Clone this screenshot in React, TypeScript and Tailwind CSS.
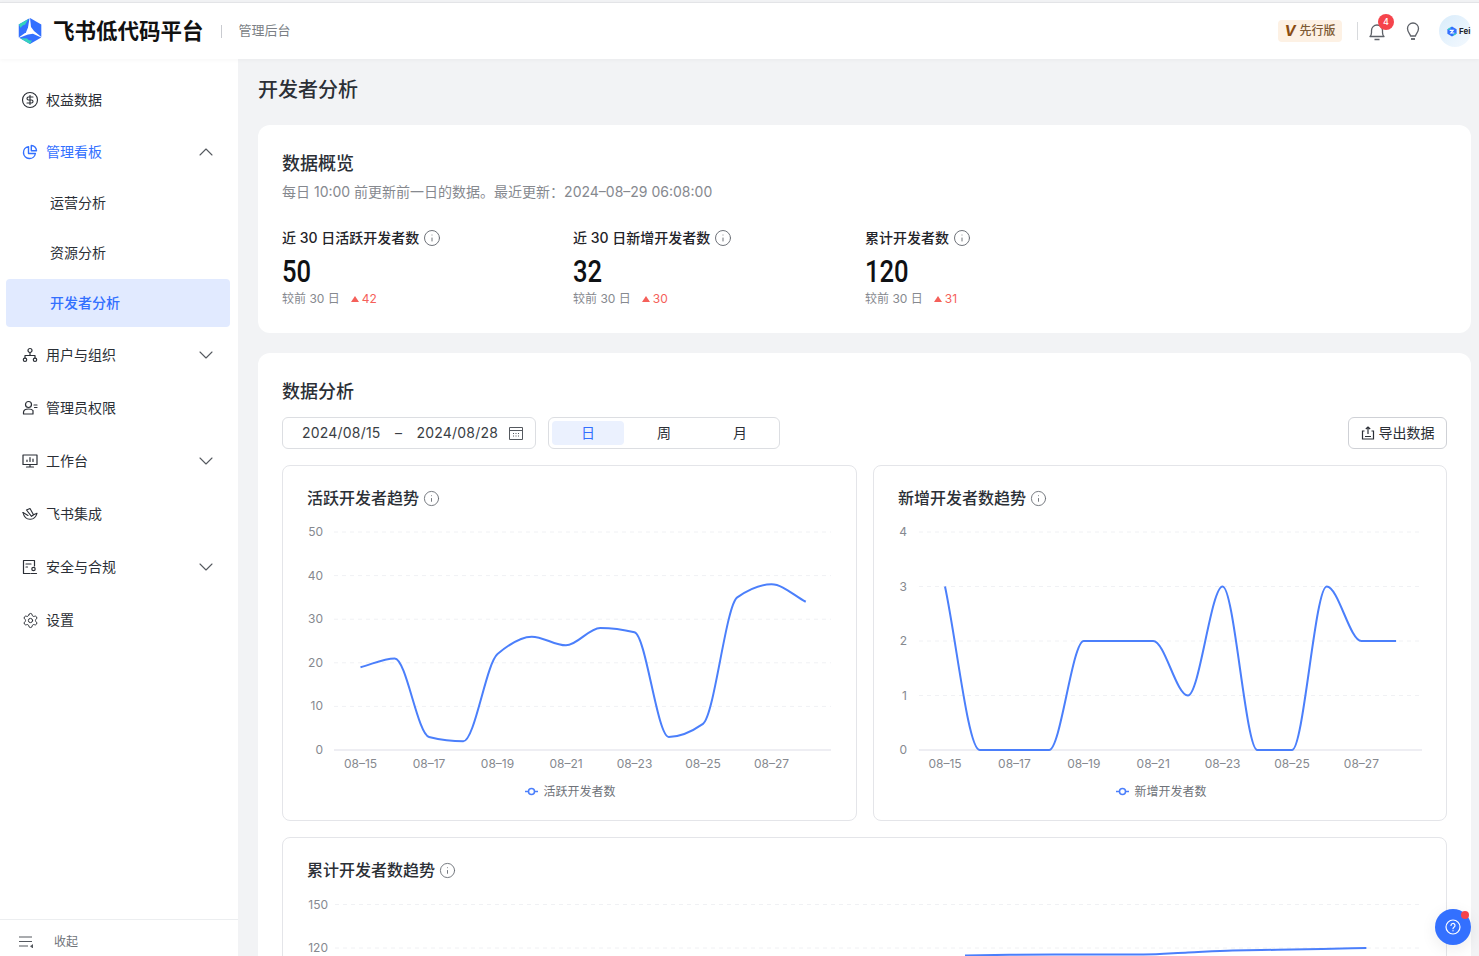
import type { ReactNode } from 'react';
import { ChevronDown, ChevronUp, CircleDollarSign, Info, Settings } from 'lucide-react';

const font = "font-['Inter','Noto_Sans_CJK_SC',sans-serif]";

// monotone cubic path, same shape as the chart lib's smooth line
function monotonePath(pts: [number, number][]): string {
  const n = pts.length;
  const d: number[] = [];
  const t: number[] = [];
  for (let i = 0; i < n - 1; i++) {
    d.push((pts[i + 1][1] - pts[i][1]) / (pts[i + 1][0] - pts[i][0]));
  }
  t.push(d[0]);
  for (let i = 1; i < n - 1; i++) {
    t.push(d[i - 1] * d[i] <= 0 ? 0 : (2 * d[i - 1] * d[i]) / (d[i - 1] + d[i]));
  }
  t.push(d[n - 2]);
  let out = `M${pts[0][0]} ${pts[0][1]}`;
  for (let i = 0; i < n - 1; i++) {
    const h = (pts[i + 1][0] - pts[i][0]) / 3;
    out += `C${pts[i][0] + h} ${pts[i][1] + h * t[i]} ${pts[i + 1][0] - h} ${pts[i + 1][1] - h * t[i + 1]} ${pts[i + 1][0]} ${pts[i + 1][1]}`;
  }
  return out;
}

const LINE = '#4b7ffb';
const dates = ['08-15', '08-17', '08-19', '08-21', '08-23', '08-25', '08-27'];

interface ChartProps {
  box: [number, number, number, number];
  gridLeft: number;
  gridRight: number;
  firstX: number;
  step: number;
  labelEnd: number;
  ticks: { label: string; y: number }[];
  values: number[];
  toY: (v: number) => number;
  legend?: { x: number; text: string };
}

function LineChart({ box, gridLeft, gridRight, firstX, step, labelEnd, ticks, values, toY, legend }: ChartProps) {
  const pts = values.map((v, i) => [firstX + i * step, toY(v)] as [number, number]);
  return (
    <svg
      width={box[2]}
      height={box[3]}
      viewBox={box.join(' ')}
      className="block"
      fontSize="12"
      fontFamily="Inter, 'Noto Sans CJK SC', sans-serif"
    >
      {ticks.map((t, i) => (
        <g key={t.label}>
          {i > 0 || !legend ? (
            <line x1={gridLeft} x2={gridRight} y1={t.y} y2={t.y} stroke="#f0f1f4" strokeDasharray="4 4" />
          ) : null}
          <text x={labelEnd} y={t.y + 4} textAnchor="end" fill="#86898f">
            {t.label}
          </text>
        </g>
      ))}
      {legend && <line x1={gridLeft} x2={gridRight} y1="750" y2="750" stroke="#e8e9ef" strokeWidth="1.5" />}
      {legend &&
        dates.map((d, i) => (
          <text key={d} x={firstX + i * 2 * step} y="768" textAnchor="middle" fill="#86898f">
            {d.replace('-', '–')}
          </text>
        ))}
      <path d={monotonePath(pts)} fill="none" stroke={LINE} strokeWidth="2" />
      {legend && (
        <g>
          <line x1={legend.x} x2={legend.x + 13} y1="791.5" y2="791.5" stroke={LINE} strokeWidth="1.5" />
          <circle cx={legend.x + 6.5} cy="791.5" r="3" fill="#fff" stroke={LINE} strokeWidth="1.5" />
          <text x={legend.x + 18.5} y="796" fill="#6f7379">
            {legend.text}
          </text>
        </g>
      )}
    </svg>
  );
}

function Logo() {
  const wing = 'M13 1 24.300 7.500V20L17 14 14 10Z';
  const sliver = 'M1.700 7.500 11.500 1.900 8 7.800C6 8 4.500 9.200 3.800 11Z';
  return (
    <svg width="26" height="28" viewBox="0 0 26 28">
      {[0, 120, 240].map((r) => (
        <path key={r} d={wing} fill="#3370ff" transform={`rotate(${r} 13 14)`} />
      ))}
      {[0, 240].map((r) => (
        <path key={r} d={sliver} fill="#35d3bd" transform={`rotate(${r} 13 14)`} />
      ))}
    </svg>
  );
}

function InfoIcon({ size = 18 }: { size?: number }) {
  return <Info size={size} strokeWidth={1.3} className="text-[#6b6f76]" />;
}

const stroke = {
  fill: 'none',
  stroke: 'currentColor',
  strokeWidth: 1.2,
  strokeLinecap: 'round' as const,
  strokeLinejoin: 'round' as const,
};

function OrgIcon() {
  return (
    <svg width="16" height="16" viewBox="0 0 16 16" {...stroke}>
      <circle cx="8" cy="3.500" r="2" />
      <circle cx="3" cy="12.800" r="1.700" />
      <circle cx="13" cy="12.800" r="1.700" />
      <path d="M8 5.500v3M3 11V8.500h10V11" />
    </svg>
  );
}

function AdminIcon() {
  return (
    <svg width="16" height="16" viewBox="0 0 16 16" {...stroke}>
      <circle cx="6.500" cy="4.500" r="3" />
      <path d="M1.500 14v-1.500c0-2 2-3.500 5-3.500s4 .8 4.500 1.500V14ZM12 5h3M12.500 7.500H15" />
    </svg>
  );
}

function BoardIcon() {
  return (
    <svg width="16" height="16" viewBox="0 0 16 16" {...stroke}>
      <path d="M1 2h14v9.500H1ZM8 11.500V14M4.500 14h7M5 8.500V7M8 8.500V4.500M11 8.500V6" />
    </svg>
  );
}

function LarkIcon() {
  return (
    <svg width="16" height="16" viewBox="0 0 16 16" {...stroke} strokeWidth="1.100">
      <path d="M1 6.500C2 11 5 13.500 8.500 13.300c3-.2 5.500-2.500 6.500-6l-3.500 1.500" />
      <path d="M1 6.500 6 9.500M4.500 4 8 2.500l3.500 6.300-2 1.500Z" />
    </svg>
  );
}

function ComplianceIcon() {
  return (
    <svg width="16" height="16" viewBox="0 0 16 16" {...stroke}>
      <path d="M8 14.500H1.500v-13h11V7M4 5h5M4 8h1.500" />
      <circle cx="11.500" cy="10" r="1.700" />
      <path d="M9 14.500h5.500" />
    </svg>
  );
}

function PieIcon() {
  return (
    <svg width="16" height="16" viewBox="0 0 16 16" fill="none" stroke="currentColor" strokeWidth="1.400" strokeLinejoin="round">
      <path d="M6.500 2.600A6 6 0 1 0 13.400 9.500H6.500Z" />
      <path d="M9.300 1.500a5.300 5.300 0 0 1 5.200 5.200H9.300Z" />
    </svg>
  );
}

function NavItem({
  icon,
  label,
  caret,
  active,
  className = '',
}: {
  icon: ReactNode;
  label: string;
  caret?: 'up' | 'down';
  active?: boolean;
  className?: string;
}) {
  return (
    <div className={`flex h-12 items-center pl-[22px] pr-[24px] text-sm ${active ? 'text-[#3370ff]' : 'text-[#2b2f36]'} ${className}`}>
      <span className="flex w-4 justify-center">{icon}</span>
      <span className="ml-2 flex-1">{label}</span>
      {caret === 'up' && <ChevronUp size={24} strokeWidth={1.1} className="-mx-1 text-[#55595f]" />}
      {caret === 'down' && <ChevronDown size={24} strokeWidth={1.1} className="-mx-1 text-[#55595f]" />}
    </div>
  );
}

function SubItem({ label, active }: { label: string; active?: boolean }) {
  return (
    <div
      className={`mx-[6px] flex h-12 w-[224px] items-center rounded pl-[44px] text-sm ${
        active ? 'bg-[#e1eaff] font-medium text-[#3370ff]' : 'text-[#2b2f36]'
      }`}
    >
      {label}
    </div>
  );
}

function Sidebar() {
  return (
    <aside className="flex w-[238px] shrink-0 flex-col bg-white">
      <nav className="flex-1 pt-[17px]">
        <NavItem icon={<CircleDollarSign size={18} strokeWidth={1.5} className="-mx-px shrink-0" />} label="权益数据" />
        <NavItem className="mt-1" icon={<PieIcon />} label="管理看板" caret="up" active />
        <div className="mt-[3px] flex flex-col gap-[2px]">
          <SubItem label="运营分析" />
          <SubItem label="资源分析" />
          <SubItem label="开发者分析" active />
        </div>
        <div className="mt-1 flex flex-col gap-[5px]">
          <NavItem icon={<OrgIcon />} label="用户与组织" caret="down" />
          <NavItem icon={<AdminIcon />} label="管理员权限" />
          <NavItem icon={<BoardIcon />} label="工作台" caret="down" />
          <NavItem icon={<LarkIcon />} label="飞书集成" />
          <NavItem icon={<ComplianceIcon />} label="安全与合规" caret="down" />
          <NavItem icon={<Settings size={17} strokeWidth={1.4} className="shrink-0" />} label="设置" />
        </div>
      </nav>
      <div className="flex h-[37px] items-center border-t border-[#eceef0] pl-[19px] pt-[7px] text-xs text-[#6f7379]">
        <svg width="15" height="12" viewBox="0 0 15 12" fill="none" stroke="#55595f" strokeWidth="1.200">
          <path d="M0 1h13M0 5.500h13M0 10h9" />
          <path d="M11 10.300 14 8v4.500Z" fill="#55595f" stroke="none" />
        </svg>
        <span className="ml-[20px]">收起</span>
      </div>
    </aside>
  );
}

function Header() {
  return (
    <header className="relative z-10 flex h-[57px] shrink-0 items-center border-t border-[#e3e4e7] bg-white pl-[17px] pr-2 shadow-[0_1px_4px_rgba(0,0,0,0.04)]">
      <Logo />
      <span className="ml-[10px] text-[21.500px] font-bold text-[#111]">飞书低代码平台</span>
      <span className="ml-[17px] h-[13px] w-px bg-[#c9cbd0]" />
      <span className="ml-[17px] text-[13px] text-[#7b7f85]">管理后台</span>
      <div className="ml-auto mr-[-1px] flex h-[22px] w-[64px] items-center justify-center gap-[4px] rounded bg-[#fdf1e4]">
        <span className="text-[15px] font-bold italic text-[#8a4d12]">V</span>
        <span className="text-xs font-medium text-[#7d5a34]">先行版</span>
      </div>
      <span className="ml-4 h-[18px] w-px bg-[#d8dadd]" />
      <div className="relative ml-[9px] flex w-5 justify-center">
        <svg width="20" height="20" viewBox="0 0 20 20" fill="none" stroke="#5d6168" strokeWidth="1.300" strokeLinejoin="round">
          <path d="M3 15.500c1-1 1.500-2 1.500-4v-2a5.500 5.500 0 0 1 11 0v2c0 2 .5 3 1.500 4ZM7.500 18.500h5" />
        </svg>
        <span className="absolute -right-[7px] -top-[7px] flex h-4 w-4 items-center justify-center rounded-full bg-[#f5444c] text-[9px] font-medium text-white">
          4
        </span>
      </div>
      <svg className="ml-4" width="20" height="20" viewBox="0 0 20 20" fill="none" stroke="#5d6168" strokeWidth="1.300">
        <path d="M7.500 15c0-2-3-3.500-3-7.500a5.500 5.500 0 0 1 11 0c0 4-3 5.500-3 7.500Z" strokeLinejoin="round" />
        <path d="M8 18h4" strokeWidth="1.800" />
      </svg>
      <div className="ml-4 flex h-8 w-8 items-center overflow-hidden rounded-full bg-[linear-gradient(135deg,#d9ecfb,#f4f9fe)] pl-2">
        <svg className="shrink-0" width="10" height="11" viewBox="0 0 26 28">
          <path d="M13 1 25 8v12l-12 7L1 20V8Z" fill="#3370ff" />
          <path d="M7 11h9l-6 7h9" fill="none" stroke="#fff" strokeWidth="3" />
          <path d="M1 8l8-5 2 2-7 5ZM25 20l-8 5-2-2 7-5Z" fill="#33d6c0" />
        </svg>
        <span className="ml-[2px] text-[8px] font-bold text-[#1f2329]">Fei</span>
      </div>
    </header>
  );
}

function Stat({ label, value, delta }: { label: string; value: string; delta: string }) {
  return (
    <div>
      <div className="flex h-5 items-center gap-[4px] text-sm font-medium text-[#1f2329]">
        {label}
        <InfoIcon />
      </div>
      <div className="mt-[1px] h-[42px] origin-left scale-x-[0.8] font-['Roboto',sans-serif] text-[32px] font-medium leading-[44px] text-[#0f1114]">
        {value}
      </div>
      <div className="mt-[-1px] flex h-[18px] items-center text-xs text-[#86898f]">
        <span>较前 30 日</span>
        <span className="ml-[11px] h-0 w-0 border-x-[4.500px] border-b-[6px] border-x-transparent border-b-[#f5605a]" />
        <span className="ml-[3px] text-[#f5605a]">{delta}</span>
      </div>
    </div>
  );
}

function ChartCard({ title, className = '', children }: { title: string; className?: string; children: ReactNode }) {
  return (
    <div className={`rounded-lg border border-[#e4e5e9] bg-white ${className}`}>
      <div className="mb-[10px] mt-5 flex h-6 items-center gap-[4px] pl-6 text-base font-medium text-[#2b2f36]">
        {title}
        <InfoIcon size={17} />
      </div>
      {children}
    </div>
  );
}

const active = [19, 21, 3, 2, 22, 26, 24, 28, 27, 3, 6, 35, 38, 34];
const added = [3, 0, 0, 0, 2, 2, 2, 1, 3, 0, 0, 3, 2, 2];
// third chart is cut off by the window, only the top of the line shows
const totalY = [955.5, 954.8, 954.5, 954.5, 954.5, 952.5, 950.5, 949.8, 949, 948];

export default function App() {
  return (
    <div className={`flex h-[956px] w-[1479px] flex-col overflow-hidden bg-[#f2f3f5] pt-[2px] ${font}`}>
      <Header />
      <div className="flex min-h-0 flex-1">
        <Sidebar />
        <main className="min-w-0 flex-1 overflow-hidden pl-5 pr-2">
          <h1 className="flex h-[66px] items-center pb-[4px] text-xl font-medium text-[#2b2f36]">开发者分析</h1>
          <section className="h-[208px] rounded-xl bg-white px-6 pt-[27px]">
            <h2 className="h-6 text-lg font-medium leading-6 text-[#2b2f36]">数据概览</h2>
            <p className="mt-[6px] h-5 text-sm leading-5 text-[#86898f]">
              每日 10:00 前更新前一日的数据。最近更新：2024–08–29 06:08:00
            </p>
            <div className="mt-[26px] grid grid-cols-[291px_292px_1fr]">
              <Stat label="近 30 日活跃开发者数" value="50" delta="42" />
              <Stat label="近 30 日新增开发者数" value="32" delta="30" />
              <Stat label="累计开发者数" value="120" delta="31" />
            </div>
          </section>
          <section className="mt-5 rounded-xl bg-white px-6 pb-6 pt-[27px]">
            <h2 className="h-6 text-lg font-medium leading-6 text-[#2b2f36]">数据分析</h2>
            <div className="mt-[13px] flex h-8 items-stretch text-sm text-[#2b2f36]">
              <div className="flex w-[254px] items-center rounded-md border border-[#dcdee2] pl-[19px] pr-[12px] tracking-[0.2px] text-[#3a3e44]">
                <span>2024/08/15</span>
                <span className="mx-auto">–</span>
                <span>2024/08/28</span>
                <svg className="ml-[11px]" width="14" height="14" viewBox="0 0 14 14" fill="none" stroke="#55595f">
                  <path d="M.5 1.500h13v12H.5ZM.5 4.500h13" />
                  <path d="M4 7.500h1M6.500 7.500h1M9 7.500h1M4 10h1M6.500 10h1M9 10h1" />
                </svg>
              </div>
              <div className="ml-3 flex w-[232px] items-center gap-1 rounded-md border border-[#dcdee2] pl-[3px]">
                <span className="flex h-6 w-[72px] items-center justify-center rounded bg-[#ebf1fe] text-[#3370ff]">日</span>
                <span className="flex h-6 w-[72px] items-center justify-center">周</span>
                <span className="flex h-6 w-[72px] items-center justify-center">月</span>
              </div>
              <div className="ml-auto flex w-[99px] items-center justify-center gap-[4px] rounded-md border border-[#cfd1d6]">
                <svg width="14" height="14" viewBox="0 0 14 14" fill="none" stroke="#2b2f36" strokeWidth="1.200">
                  <path d="M3.500 5H1.500v8h11V5h-2M4 10.500h6M7 8V1M4.800 3 7 1l2.200 2" />
                </svg>
                导出数据
              </div>
            </div>
            <div className="mt-4 grid grid-cols-[575px_574px] gap-4">
              <ChartCard title="活跃开发者趋势" className="h-[356px]">
                <LineChart
                  box={[283, 520, 573, 290]}
                  gridLeft={334}
                  gridRight={831}
                  firstX={360.5}
                  step={34.25}
                  labelEnd={323}
                  ticks={[
                    { label: '0', y: 750 },
                    { label: '10', y: 706.4 },
                    { label: '20', y: 662.8 },
                    { label: '30', y: 619.2 },
                    { label: '40', y: 575.6 },
                    { label: '50', y: 532 },
                  ]}
                  values={active}
                  toY={(v) => 750 - v * 4.36}
                  legend={{ x: 525, text: '活跃开发者数' }}
                />
              </ChartCard>
              <ChartCard title="新增开发者数趋势" className="h-[356px]">
                <LineChart
                  box={[874, 520, 572, 290]}
                  gridLeft={919}
                  gridRight={1422}
                  firstX={945}
                  step={34.7}
                  labelEnd={907}
                  ticks={[
                    { label: '0', y: 750 },
                    { label: '1', y: 695.5 },
                    { label: '2', y: 641 },
                    { label: '3', y: 586.5 },
                    { label: '4', y: 532 },
                  ]}
                  values={added}
                  toY={(v) => 750 - v * 54.5}
                  legend={{ x: 1116, text: '新增开发者数' }}
                />
              </ChartCard>
              <ChartCard title="累计开发者数趋势" className="col-span-2 h-[356px]">
                <LineChart
                  box={[283, 892, 1163, 90]}
                  gridLeft={335}
                  gridRight={1420}
                  firstX={965}
                  step={44.6}
                  labelEnd={328}
                  ticks={[
                    { label: '120', y: 948 },
                    { label: '150', y: 904.5 },
                  ]}
                  values={totalY}
                  toY={(v) => v}
                />
              </ChartCard>
            </div>
          </section>
        </main>
      </div>
      <div className="fixed bottom-[11px] right-[8px] flex h-9 w-9 items-center justify-center rounded-full bg-[#3370ff] shadow-[0_4px_16px_rgba(0,0,0,0.08)]">
        <svg width="16" height="16" viewBox="0 0 16 16" fill="none" stroke="#fff" strokeWidth="1.200" strokeLinecap="round">
          <circle cx="8" cy="8" r="7" />
          <path d="M6 6.500a2 2 0 1 1 3 1.700c-.7.400-1 .8-1 1.500M8 11.700v.1" />
        </svg>
        <span className="absolute right-[2px] top-[2px] h-2 w-2 rounded-full bg-[#f5444c]" />
      </div>
    </div>
  );
}
